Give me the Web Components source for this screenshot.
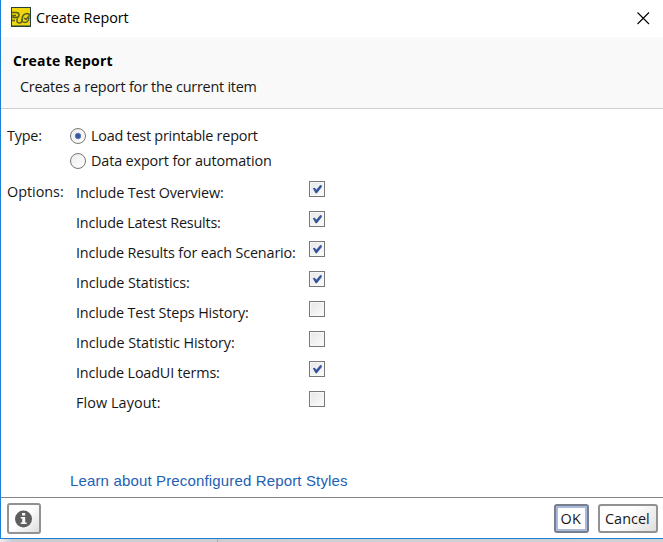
<!DOCTYPE html>
<html lang="en"><head><meta charset="utf-8"><title>Create Report</title>
<style>html,body{margin:0;height:542px;overflow:hidden;background:#fff}body{font:14.4px/20px "Open Sans","Noto Sans",sans-serif;color:#171717}</style></head>
<body><report-dialog></report-dialog>
<script>
const define=(name,html,setup)=>customElements.define(name,class extends HTMLElement{
  constructor(){super();this.attachShadow({mode:'open'}).innerHTML=html}
  connectedCallback(){setup&&setup(this,this.shadowRoot)}
});
/* A single-line label set to a given width by tracking. */
define('ui-label',`<style>:host{display:block;height:20px;white-space:nowrap}span{display:inline-block;line-height:20px;margin-left:-1px}</style><span></span>`,(el,r)=>{
  const s=r.querySelector('span');s.textContent=el.getAttribute('text');
  const w=+el.getAttribute('width');el.style.width=w+'px';
  s.style.letterSpacing='0px';
  s.style.letterSpacing=((w+.7-s.getBoundingClientRect().width)/s.textContent.length)+'px';
});
define('app-icon',`<style>:host{display:block;width:20px;height:20px}svg{display:block}</style>
<svg width="20" height="20" viewBox="0 0 20 20"><path fill="#273f3c" d="M0 0h20v20H0z"/><path fill="#f0d60c" d="M1 1h18v17.500H1z"/><g fill="none" stroke="#58601f" stroke-width="1.500"><path d="M1 5.500h4q3 0 3 2.500t-3 2.500H2V8.500h3M1 13.500h3M6.500 11q-2 5 2 5 2.500 0 2.500-3 0-6 5-6.500 2.500 0 2.500 2"/><path d="M18 10.500q-.5 5-4 5t-3-3.500M13 11l2 1.500 3.500-4"/></g></svg>`);
define('close-icon',`<style>:host{display:block;width:13px;height:13px}svg{display:block}</style><svg width="13" height="13"><path d="M.5.5l11.500 11.500M12 .5L.5 12" stroke="#000" stroke-width="1.1"/></svg>`);
define('title-bar',`<style>:host{display:flex;box-sizing:border-box;height:37px;padding:7px 13px 0 10px;background:#fff;color:#000}ui-label{margin:1px 0 0 6px}close-icon{margin:5px 0 0 auto}</style><app-icon></app-icon><ui-label text="Create Report" width="92"></ui-label><close-icon></close-icon>`);
define('report-heading',`<style>:host{display:block;box-sizing:border-box;height:72px;padding:14px 0 0 12px;background:#f9f9f9;border-bottom:1px solid #d0d0d0}.b{font-weight:700;color:#000;font-size:14px;margin-left:1px}.d{margin:6px 0 0 8px}</style><ui-label class="b" text="Create Report" width="99"></ui-label><ui-label class="d" text="Creates a report for the current item" width="236"></ui-label>`);
define('radio-option',`<style>:host{display:flex;height:25px}i{box-sizing:border-box;width:16px;height:16px;margin:2px 6px 0 0;border:1px solid #777;border-radius:50%;background:linear-gradient(135deg,#ececec,#fff)}:host([checked]) i{background:radial-gradient(circle at 50% 50%,#34559c 0 1.500px,#6f8fc9 3px,transparent 3.600px),linear-gradient(135deg,#ececec,#fff)}</style><i></i><ui-label></ui-label>`,(el,r)=>{
  const l=document.createElement('ui-label');l.setAttribute('text',el.getAttribute('text'));l.setAttribute('width',el.getAttribute('width'));r.querySelector('ui-label').replaceWith(l)});
define('check-option',`<style>:host{display:grid;grid-template-columns:232px 16px;height:30px}.l{margin-top:2px}i{box-sizing:border-box;width:16px;height:16px;border:1px solid #777;background:linear-gradient(135deg,#e6e6e6,#fcfcfc);box-shadow:inset 0 0 0 1px #f8f8f8}svg{display:none}:host([checked]) svg{display:block}</style><div class="l"></div><i><svg width="14" height="14"><path d="M2.800 6.300l2-.5 1.500 2 4-4.800 1.500.5v1.500L6.900 11.200H5.600z" fill="#34559c"/></svg></i>`,(el,r)=>{
  const l=document.createElement('ui-label');l.setAttribute('text',el.getAttribute('text'));l.setAttribute('width',el.getAttribute('width'));r.querySelector('.l').replaceChildren(l)});
define('report-form',`<style>:host{display:grid;grid-template-columns:62px 1fr;grid-template-rows:55px 290px 24px;height:388px;box-sizing:border-box;padding:17px 0 0 7px}.o{padding:0 0 0 7px}.oh{margin-top:1px}link-text{grid-column:2}</style>
<ui-label text="Type:" width="34"></ui-label><div><radio-option checked text="Load test printable report" width="166"></radio-option><radio-option text="Data export for automation" width="180"></radio-option></div>
<ui-label class="oh" text="Options:" width="56"></ui-label><div class="o"><slot></slot></div><link-text></link-text>`);
define('link-text',`<style>:host{display:block;color:#1c61b4;font:15px/20px "Liberation Sans",Arial,sans-serif;padding-left:1px}</style><ui-label text="Learn about Preconfigured Report Styles" width="277"></ui-label>`);
define('dialog-button',`<style>:host{display:flex;box-sizing:border-box;height:29px;border:2px solid #929292;border-radius:3px;align-items:center;justify-content:center;background:linear-gradient(135deg,#fff 45%,#dedede)}:host([primary]){border-color:#777e8d;background:#fff;box-shadow:inset 0 0 0 2px #a9b9db}</style><slot></slot>`);
define('dialog-footer',`<style>:host{display:flex;box-sizing:border-box;height:41px;padding:5px 5px 0 6px;border-top:1px solid #858585}.i{width:34px;height:31px}.ok{width:35px;margin:1px 9px 0 auto}.c{width:60px;margin-top:1px}svg{display:block}</style>
<dialog-button class="i"><svg width="18" height="18"><circle cx="8.500" cy="9" r="8.500" fill="#5e5e5e"/><path d="M7 3h3.200v2.500H7zM5.700 7h4.500v5.500h1.500V14h-6v-1.500h1.500v-4H5.700z" fill="#f7f7f7"/></svg></dialog-button><dialog-button class="ok" primary><ui-label text="OK" width="20"></ui-label></dialog-button><dialog-button class="c"><ui-label text="Cancel" width="44"></ui-label></dialog-button>`);
define('report-dialog',`<style>:host{display:block;height:542px}.frame{box-sizing:border-box;height:539px;border-left:1px solid #1982d8;border-bottom:1px solid #1982d8;background:#fff}.under{display:flex;height:3px;background:linear-gradient(90deg,#eee,#cdcdcd 12px,#d1d1d1)}.under i{width:1px;margin-left:217px;background:#aaa}</style><div class="frame"><title-bar></title-bar><report-heading></report-heading><report-form>
<check-option checked text="Include Test Overview:" width="147"></check-option><check-option checked text="Include Latest Results:" width="144"></check-option><check-option checked text="Include Results for each Scenario:" width="219"></check-option><check-option checked text="Include Statistics:" width="113"></check-option><check-option text="Include Test Steps History:" width="172"></check-option><check-option text="Include Statistic History:" width="158"></check-option><check-option checked text="Include LoadUI terms:" width="143"></check-option><check-option text="Flow Layout:" width="84"></check-option>
</report-form><dialog-footer></dialog-footer></div><div class="under"><i></i></div>`);
</script></body></html>
